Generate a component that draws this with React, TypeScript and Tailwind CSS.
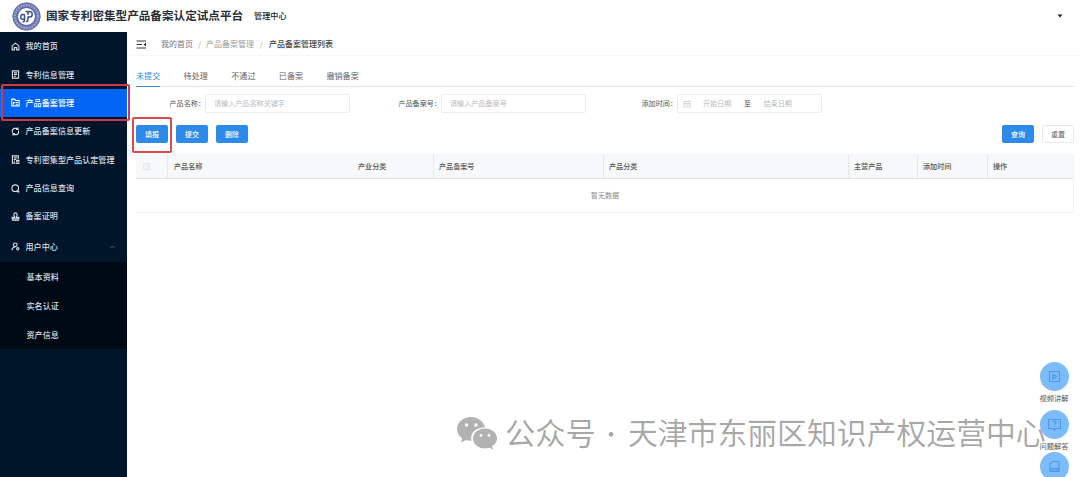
import React from 'react';

type IconName = 'home' | 'doc' | 'folder' | 'refresh' | 'audit' | 'search' | 'stamp' | 'user';

const menu: { icon: IconName; label: string; active?: boolean }[] = [
  { icon: 'home', label: '我的首页' },
  { icon: 'doc', label: '专利信息管理' },
  { icon: 'folder', label: '产品备案管理', active: true },
  { icon: 'refresh', label: '产品备案信息更新' },
  { icon: 'audit', label: '专利密集型产品认定管理' },
  { icon: 'search', label: '产品信息查询' },
  { icon: 'stamp', label: '备案证明' },
];

const subMenu = ['基本资料', '实名认证', '资产信息'];
const tabs = ['未提交', '待处理', '不通过', '已备案', '撤销备案'];

const columns = [
  { label: '产品名称', width: 'w-[184px]' },
  { label: '产业分类', width: 'w-[81px]' },
  { label: '产品备案号', width: 'w-[170px]', divider: true },
  { label: '产品分类', width: 'w-[245px]', divider: true },
  { label: '主营产品', width: 'w-[69px]', divider: true },
  { label: '添加时间', width: 'w-[70px]', divider: true },
  { label: '操作', width: 'flex-1', divider: true },
];

const iconPaths: Record<IconName, React.ReactNode> = {
  home: <path d="M2 7l6-5 6 5v7h-4v-4H6v4H2z" />,
  doc: <path d="M2.5 1.5h11v13h-11zM5 5h6M5 8h6M5 11h4" />,
  folder: <path d="M1.5 14V2h5l1.5 2.5h6.5V14zM4.5 7v4.5M4.5 8h3M8.5 8H12M8.5 11H12" />,
  refresh: (
    <>
      <path d="M2.500 10V5.500l3-3h5l1.500 1.500M13.500 6v4.500l-3 3h-5L4 12" />
      <path d="M12.500 1v3.500H9M3.500 15v-3.500H7" />
    </>
  ),
  audit: <path d="M13 7V1.500H2.500v13H8M5 5h5.500M5 8h4M5 11h2M10 9.500h4v3h-4zM9 15h6" />,
  search: (
    <>
      <circle cx="7.500" cy="7.500" r="5.900" />
      <path d="M11 14h4M11 11l3 3" />
    </>
  ),
  stamp: <path d="M6.500 8.500C4 5 5 1.500 8 1.500s4 3.500 1.500 7v1H14V12H2V9.500h4.500zM1.500 14.500h13" />,
  user: (
    <>
      <circle cx="7.500" cy="5" r="3.300" />
      <path d="M1.500 14.500c.5-3.500 2.500-5.500 6-6" />
      <circle cx="12" cy="12" r="2" />
    </>
  ),
};

const MenuIcon = ({ name }: { name: IconName }) => (
  <svg className="w-[9px] h-[9px] shrink-0" viewBox="0 0 16 16" fill="none" stroke="currentColor" strokeWidth={2}>
    {iconPaths[name]}
  </svg>
);

const Logo = () => (
  <svg className="w-[29px] h-[29px]" viewBox="0 0 58 58" fill="none">
    <circle cx="29" cy="29" r="27.500" fill="#6f79b4" stroke="#5a64a5" strokeWidth="1.500" />
    <circle cx="29" cy="29" r="23" stroke="#a5acd3" strokeWidth="4" strokeDasharray="3 2.600" />
    <circle cx="29" cy="29" r="18" fill="#fff" stroke="#4c579f" strokeWidth="2" />
    <path d="M25 25h-3a4.500 4.500 0 0 0-4.500 4.500v1a4 4 0 0 0 4 4H25M25 25v11a4 4 0 0 1-4 4" stroke="#3f4b97" strokeWidth="3" />
    <path d="M27 19h8a5.500 5.500 0 0 1 0 11h-3v5a4 4 0 0 1-4 4M32 19v7" stroke="#3f4b97" strokeWidth="3" />
  </svg>
);

const Button = ({ children, plain }: { children: React.ReactNode; plain?: boolean }) => (
  <button
    className={`w-8 h-[18px] rounded-[2px] text-[7px] leading-none flex items-center justify-center ${
      plain ? 'bg-white border border-[#e9e9e9] text-[#606266]' : 'bg-[#2d8ae8] text-white font-medium'
    }`}
  >
    {children}
  </button>
);

const Field = ({ label, placeholder }: { label: string; placeholder: string }) => (
  <div className="flex items-center">
    <span className="w-9 text-[#555] whitespace-nowrap flex justify-end">{label}</span>
    <div className="w-[145px] h-[19px] border border-[#ebedf0] rounded-[2px] px-2 flex items-center text-[#b8bbc2]">
      {placeholder}
    </div>
  </div>
);

const HelpButton = ({ children }: { children: React.ReactNode }) => (
  <div className="w-[29px] h-[29px] rounded-full bg-[#7dbcfb] flex items-center justify-center">
    <svg className="w-[13px] h-[13px]" viewBox="0 0 26 26" fill="none" stroke="#4a97e6" strokeWidth={2.2}>
      {children}
    </svg>
  </div>
);

const Sidebar = () => (
  <aside className="w-[127px] h-[445px] shrink-0 bg-[#001529] text-[#d8dfe6] text-[8.100px] font-medium">
    {menu.map((item) => (
      <div
        key={item.label}
        className={`h-[28.400px] pl-[11px] flex items-center gap-[5.500px] whitespace-nowrap ${item.active ? 'bg-[#0065f5] text-white' : ''}`}
      >
        <MenuIcon name={item.icon} />
        {item.label}
      </div>
    ))}
    <div className="h-[31.500px] pt-px pl-[11px] pr-3 flex items-center gap-[5.500px]">
      <MenuIcon name="user" />
      用户中心
      <svg className="w-[5px] h-[4px] ml-auto" viewBox="0 0 10 8" fill="none" stroke="#66717d" strokeWidth={1.5}>
        <path d="M1 6l4-4 4 4" />
      </svg>
    </div>
    <div className="bg-[#000a14]">
      {subMenu.map((label) => (
        <div key={label} className="h-[29px] pl-[26.500px] flex items-center">
          {label}
        </div>
      ))}
    </div>
  </aside>
);

const App: React.FC = () => {
  return (
    <div className="relative w-[1080px] h-[477px] overflow-hidden bg-white leading-none font-['Noto_Sans_CJK_SC',sans-serif]">
      <header className="h-8 pl-[12px] pr-[17px] flex items-center">
        <Logo />
        <h1 className="ml-[5px] text-[11.600px] font-bold text-[#2a2e35] whitespace-nowrap">国家专利密集型产品备案认定试点平台</h1>
        <span className="ml-[11px] text-[8.100px] font-medium text-[#222]">管理中心</span>
        <svg className="w-[6px] h-[4px] ml-auto" viewBox="0 0 6 4">
          <path d="M.5 .5h5L3 3.500z" fill="#222" />
        </svg>
      </header>

      <div className="flex">
        <Sidebar />
        <main className="flex-1 pl-[9px] pr-[6px]">
          <div className="h-[23px] pt-px flex items-center text-[8px] text-[#777]">
            <svg className="w-[11px] h-[9px] mr-[14px]" viewBox="0 0 22 18" fill="none" stroke="#333" strokeWidth={2}>
              <path d="M1 2h19M1 9h11M1 16h19" />
              <path d="M20 5v8l-5-4z" fill="#333" stroke="none" />
            </svg>
            <span>我的首页</span>
            <span className="w-[13px] text-center text-[#aaa]">/</span>
            <span className="text-[#999]">产品备案管理</span>
            <span className="w-[15px] text-center text-[#aaa]">/</span>
            <span className="font-medium text-[#444]">产品备案管理列表</span>
          </div>
          <div className="h-px bg-[#f7f7f7] -ml-[9px] -mr-[6px]" />

          <nav className="h-[31px] pt-[10px] flex items-stretch gap-[23.300px] border-b border-[#e1e5ea] text-[8.100px] text-[#606266]">
            {tabs.map((tab, i) => (
              <div
                key={tab}
                className={`flex items-center -mb-px border-b ${i === 0 ? 'text-[#2f8fe6] border-[#3f8fb8]' : 'border-transparent'}`}
              >
                {tab}
              </div>
            ))}
          </nav>

          <div className="mt-[7px] pl-[33px] flex text-[7.100px]">
            <Field label="产品名称：" placeholder="请输入产品名称关键字" />
            <div className="ml-[55px]">
              <Field label="产品备案号：" placeholder="请输入产品备案号" />
            </div>
            <div className="ml-[55px] flex items-center">
              <span className="w-9 flex justify-end whitespace-nowrap text-[#555]">添加时间：</span>
              <div className="w-[145px] h-[19px] border border-[#ebedf0] rounded-[2px] flex items-center text-[#b8bbc2]">
                <svg className="w-[8px] h-[8px] ml-[5px] mr-[12px]" viewBox="0 0 16 16" fill="none" stroke="#c5c8ce" strokeWidth={1.4}>
                  <path d="M1.500 3h13v11h-13zM1.500 7h13M5 1v3M11 1v3M4 10h8" />
                </svg>
                <span>开始日期</span>
                <span className="mx-[12.500px] text-[#444]">至</span>
                <span>结束日期</span>
              </div>
            </div>
          </div>

          <div className="mt-[12px] flex gap-2">
            <Button>填报</Button>
            <Button>提交</Button>
            <Button>删除</Button>
            <div className="ml-auto flex gap-2">
              <Button>查询</Button>
              <Button plain>重置</Button>
            </div>
          </div>

          <div className="mt-[11px] text-[7.100px] border-r border-[#f3f3f3]">
            <div className="h-[25px] flex bg-[#f7f8f9] border-b border-[#dfe3e8] font-medium text-[#555]">
              <div className="w-[32px] pt-px pl-[7px] flex items-center border-r border-[#e6e8eb]">
                <span className="w-[7px] h-[7px] border border-[#e2e5ea] rounded-[1px] bg-[#f2f4f6]" />
              </div>
              {columns.map((col) => (
                <div
                  key={col.label}
                  className={`pt-px pl-[5px] flex items-center border-l ${col.divider ? 'border-[#e6e8eb]' : 'border-transparent'} ${col.width}`}
                >
                  {col.label}
                </div>
              ))}
            </div>
            <div className="h-[34px] pt-px flex items-center justify-center border-b border-[#ededed] text-[#85888e] pl-px">暂无数据</div>
          </div>
        </main>
      </div>

      {/* Red callouts around the active menu item and the first button */}
      <div className="absolute left-[1px] top-[84px] w-[129px] h-[37px] border-2 border-[#cf3a48] rounded-[2px]" />
      <div className="absolute left-[132px] top-[117px] w-[40px] h-[36px] border-2 border-[#dc4a4a] rounded-[2px]" />

      {/* Floating help buttons */}
      <div className="absolute right-[9px] top-[362px] w-[34px] flex flex-col items-center text-[7.300px] text-[#555] whitespace-nowrap">
        <HelpButton>
          <path d="M3 3h20v20H3zM10 8v10l7-5z" />
        </HelpButton>
        <span className="mt-[4px]">视频讲解</span>
        <div className="mt-[7.500px]">
          <HelpButton>
            <path d="M1 3h24v18h-9l-3 3-3-3H1zM10 9c0-4 6-4 6 0 0 2-3 2-3 5M13 16v2" />
          </HelpButton>
        </div>
        <span className="mt-[4px]">问题解答</span>
        <div className="mt-[2px]">
          <HelpButton>
            <path d="M9 3h13v20H4V8zM4 17h18M4 20h18" />
          </HelpButton>
        </div>
      </div>

      {/* Account watermark */}
      <div className="absolute left-[457px] top-[412px] h-10 flex items-center text-[30.300px] text-black/35 whitespace-nowrap">
        <svg className="w-[40px] h-[33px] mt-[3px] mr-[8px]" viewBox="0 0 40 33">
          <path
            fill="#b2b2b2"
            d="M14 0C6.300 0 0 5.200 0 12c0 3.900 2 7.200 5.200 9.400L4 25.500l5-2.500c1.800.6 3.600.9 5.500.8C12.500 15 20 10 28 10.500 26.700 4.500 21 0 14 0z"
          />
          <path fill="#b2b2b2" d="M28 11.500c-6.700 0-12 4.300-12 9.900s5.300 9.900 12 9.900c1.500 0 2.900-.2 4.200-.6L36 32.500l-1-3.400c3-1.800 5-4.500 5-7.700 0-5.600-5.300-9.900-12-9.900z" />
          <g fill="#fff">
            <circle cx="9.500" cy="8" r="1.700" />
            <circle cx="19" cy="8" r="1.700" />
            <circle cx="24" cy="18.500" r="1.400" />
            <circle cx="32" cy="18.500" r="1.400" />
          </g>
        </svg>
        <span>公众号</span>
        <span className="w-[32px] pr-[2px] text-center text-[22px]">·</span>
        <span className="text-[29.850px]">天津市东丽区知识产权运营中心</span>
      </div>
    </div>
  );
};

export default App;
